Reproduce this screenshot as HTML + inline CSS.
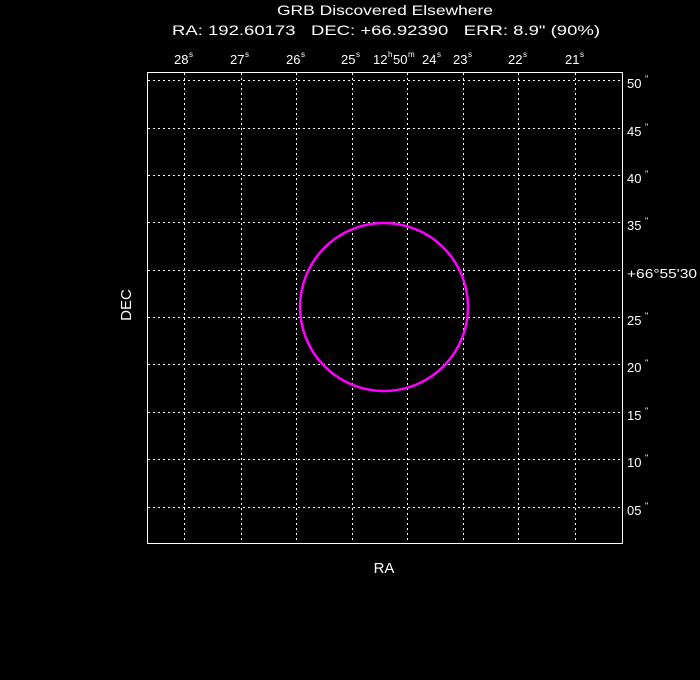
<!DOCTYPE html>
<html><head><meta charset="utf-8"><style>
html,body{margin:0;padding:0;background:#000;}
svg{display:block;}
text{font-family:"Liberation Sans",sans-serif;fill:#fff;}
</style></head><body>
<svg width="700" height="680" viewBox="0 0 700 680" xmlns="http://www.w3.org/2000/svg">
<text x="277" y="15" font-size="14" textLength="216" lengthAdjust="spacingAndGlyphs">GRB Discovered Elsewhere</text>
<text x="172" y="35" font-size="14" textLength="428" lengthAdjust="spacingAndGlyphs" xml:space="preserve">RA: 192.60173   DEC: +66.92390   ERR: 8.9" (90%)</text>
<g stroke="#fff" stroke-width="1" stroke-dasharray="2,3">
<line x1="184.5" y1="73" x2="184.5" y2="543"/>
<line x1="241.5" y1="73" x2="241.5" y2="543"/>
<line x1="296.5" y1="73" x2="296.5" y2="543"/>
<line x1="352.5" y1="73" x2="352.5" y2="543"/>
<line x1="407.5" y1="73" x2="407.5" y2="543"/>
<line x1="463.5" y1="73" x2="463.5" y2="543"/>
<line x1="518.5" y1="73" x2="518.5" y2="543"/>
<line x1="575.5" y1="73" x2="575.5" y2="543"/>
<line x1="148" y1="80.5" x2="622" y2="80.5"/>
<line x1="148" y1="128.5" x2="622" y2="128.5"/>
<line x1="148" y1="175.5" x2="622" y2="175.5"/>
<line x1="148" y1="222.5" x2="622" y2="222.5"/>
<line x1="148" y1="270.5" x2="622" y2="270.5"/>
<line x1="148" y1="317.5" x2="622" y2="317.5"/>
<line x1="148" y1="364.5" x2="622" y2="364.5"/>
<line x1="148" y1="412.5" x2="622" y2="412.5"/>
<line x1="148" y1="459.5" x2="622" y2="459.5"/>
<line x1="148" y1="507.5" x2="622" y2="507.5"/>
</g>
<rect x="147.5" y="72.5" width="475" height="471" fill="none" stroke="#fff" stroke-width="1"/>
<circle cx="384" cy="307" r="84" fill="none" stroke="#ff00ff" stroke-width="2.5"/>
<g font-size="13">
<text x="174" y="64">28</text><text x="189" y="57" font-size="8">s</text>
<text x="230" y="64">27</text><text x="245" y="57" font-size="8">s</text>
<text x="286" y="64">26</text><text x="301" y="57" font-size="8">s</text>
<text x="341" y="64">25</text><text x="356" y="57" font-size="8">s</text>
<text x="373" y="64">12</text><text x="388" y="57" font-size="8">h</text>
<text x="393" y="64">50</text><text x="408" y="57" font-size="8">m</text>
<text x="422" y="64">24</text><text x="437" y="57" font-size="8">s</text>
<text x="453" y="64">23</text><text x="468" y="57" font-size="8">s</text>
<text x="508" y="64">22</text><text x="523" y="57" font-size="8">s</text>
<text x="565" y="64">21</text><text x="580" y="57" font-size="8">s</text>
<text x="627" y="88">50</text><text x="645" y="82" font-size="9">"</text>
<text x="627" y="136">45</text><text x="645" y="130" font-size="9">"</text>
<text x="627" y="183">40</text><text x="645" y="177" font-size="9">"</text>
<text x="627" y="230">35</text><text x="645" y="224" font-size="9">"</text>
<text x="627" y="278" textLength="70" lengthAdjust="spacingAndGlyphs">+66°55'30</text>
<text x="627" y="325">25</text><text x="645" y="319" font-size="9">"</text>
<text x="627" y="372">20</text><text x="645" y="366" font-size="9">"</text>
<text x="627" y="420">15</text><text x="645" y="414" font-size="9">"</text>
<text x="627" y="467">10</text><text x="645" y="461" font-size="9">"</text>
<text x="627" y="515">05</text><text x="645" y="509" font-size="9">"</text>
</g>
<text x="384" y="573" font-size="15" text-anchor="middle">RA</text>
<text transform="translate(131,305) rotate(-90)" font-size="15" text-anchor="middle">DEC</text>
</svg>
</body></html>
